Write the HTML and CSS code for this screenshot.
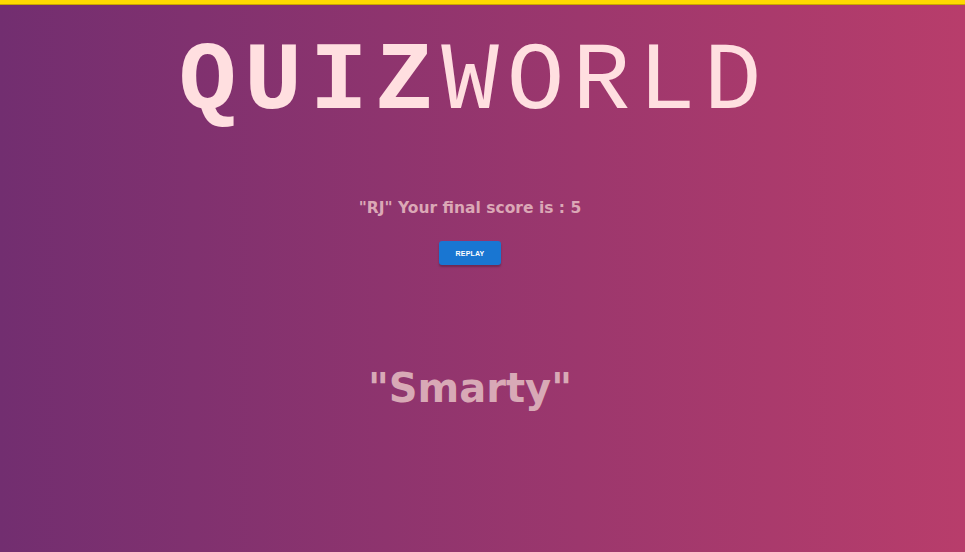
FILE: index.html
```html
<!DOCTYPE html>
<html>
<head>
<meta charset="utf-8">
<link rel="stylesheet" href="styles.css">
</head>
<body>
<div class="topbar"></div>
<main class="page">
  <h1 class="logo"><span class="logo-bold">QUIZ</span><span class="logo-thin">WORLD</span></h1>
  <p class="score">"RJ" Your final score is : 5</p>
  <button class="replay">REPLAY</button>
  <p class="verdict">"Smarty"</p>
</main>
</body>
</html>
```
FILE: styles.css
```css
html, body {
  margin: 0;
  padding: 0;
  height: 100%;
}
body {
  background: linear-gradient(90deg, #722e70 0%, #b83d6b 100%);
  overflow: hidden;
}
.topbar {
  height: 4px;
  background: #ffd900;
  border-bottom: 1px solid #c9a600;
}
.page {
  display: flex;
  flex-direction: column;
  align-items: center;
  padding-right: 25px;
}
.logo {
  margin: 28px 0 0 0;
  padding-left: 8px;
  font-family: "Courier New", "Liberation Mono", Cousine, monospace;
  font-size: 96px;
  line-height: 100px;
  letter-spacing: 8px;
  color: #ffdfe0;
  font-weight: normal;
}
.logo-bold {
  font-weight: bold;
}
.score {
  margin: 66px 0 0 0;
  font-family: "DejaVu Sans", Verdana, sans-serif;
  font-weight: bold;
  font-size: 15.5px;
  color: #dba8b6;
  line-height: 18px;
}
.replay {
  margin-top: 24px;
  width: 62px;
  height: 24px;
  border: none;
  border-radius: 3px;
  background: #1976d2;
  color: #fff;
  font-family: "Liberation Sans", Arial, sans-serif;
  font-weight: bold;
  font-size: 7px;
  letter-spacing: 0.2px;
  box-shadow: 0 2px 2px rgba(0,0,0,0.25);
  padding: 0;
}
.verdict {
  margin: 100px 0 0 0;
  font-family: "DejaVu Sans", sans-serif;
  font-weight: bold;
  font-size: 40px;
  line-height: 46px;
  color: #d8a9b6;
}
```
